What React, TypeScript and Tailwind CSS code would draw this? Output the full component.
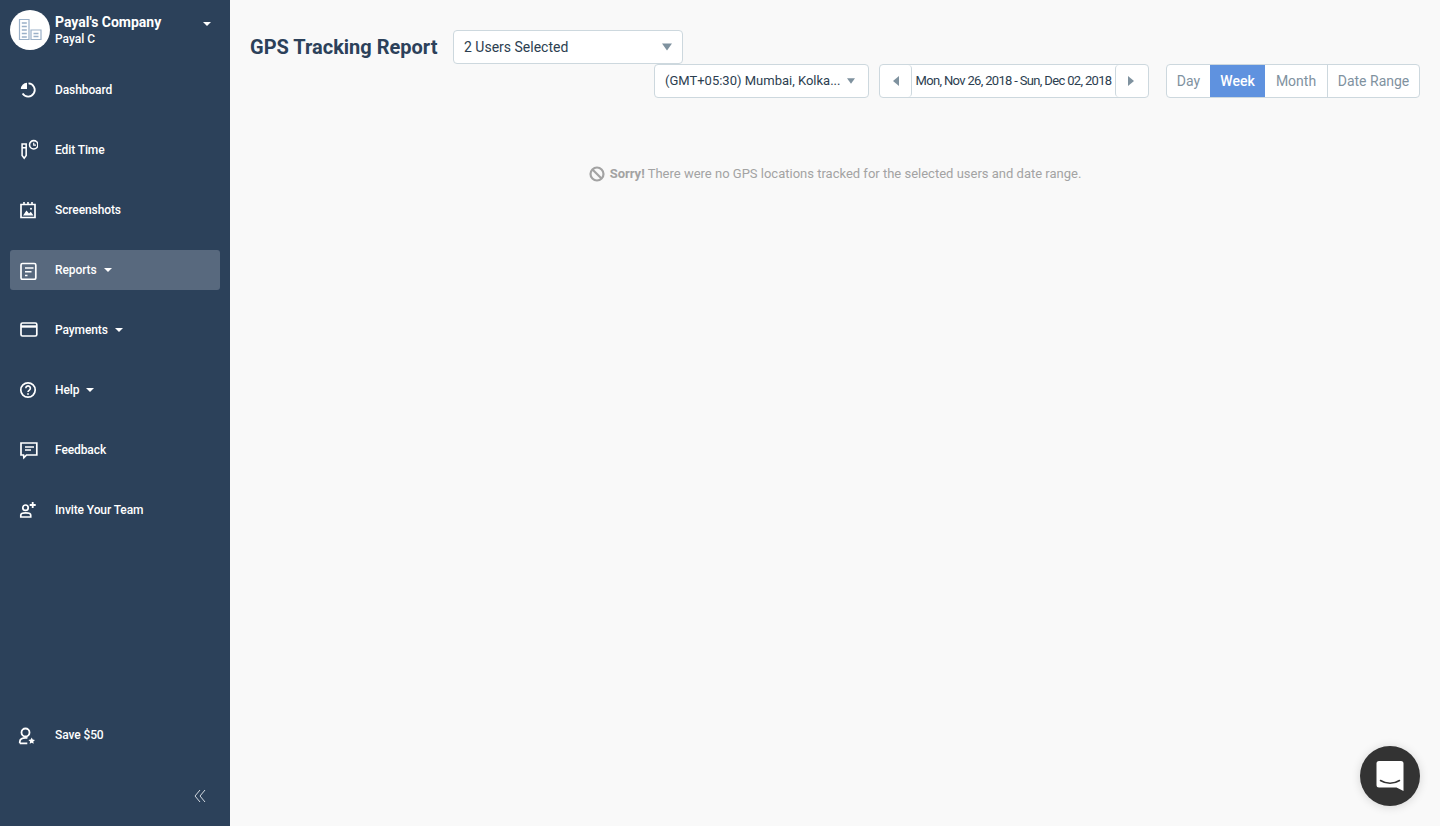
import { ReactNode } from "react";

const Caret = ({ className = "" }: { className?: string }) => (
  <svg viewBox="0 0 8 4" className={`w-2 h-1 fill-white ${className}`}>
    <path d="M0 0h8L4 4z" />
  </svg>
);

const solid = "fill-white stroke-none";
const icon = "w-5 h-5 fill-none stroke-white";

const icons: Record<string, ReactNode> = {
  dashboard: (
    <svg viewBox="0 0 20 20" className={icon}>
      <path d="M4.600 13.600a6.600 6.600 0 1 0 5.900-10.200" strokeWidth="1.800" />
      <path d="M9 2.800v6.300H2.800A6.200 6.200 0 0 1 9 2.800z" className={solid} />
    </svg>
  ),
  edit: (
    <svg viewBox="-1 0 22 22" className="w-[22px] h-[22px] fill-none stroke-white">
      <path d="M3.500 4.500h4.500v12.500l-2.200 3-2.300-3z" strokeWidth="1.700" />
      <path d="M3.500 8.500h4.500" strokeWidth="1.700" />
      <circle cx="16.300" cy="5.300" r="4.600" strokeWidth="1.700" />
      <path d="M16.300 3v2.600h2.500" strokeWidth="1.300" />
    </svg>
  ),
  screenshots: (
    <svg viewBox="0 0 20 20" className={icon}>
      <path d="M3 4.500h14v13H3z" strokeWidth="1.700" />
      <path d="M6 2v3M10 2v3M14 2v3" strokeWidth="1.600" />
      <path d="M5 15.500l3.500-5 2.500 3 1.800-1.800 2.700 3.800z" className={solid} />
      <circle cx="13" cy="8.800" r="1" className={solid} />
    </svg>
  ),
  reports: (
    <svg viewBox="0 0 20 20" className={icon}>
      <rect x="3" y="3.500" width="14.800" height="15.800" rx="1.500" strokeWidth="1.700" />
      <path d="M7 8h8.500M7 11.700h6.500M7 15.500h2.500" strokeWidth="1.500" />
    </svg>
  ),
  payments: (
    <svg viewBox="0 0 20 20" className={icon}>
      <rect x="3" y="3" width="15.800" height="13" rx="1.500" strokeWidth="1.700" />
      <path d="M3 6.500h15.800" strokeWidth="2.400" />
    </svg>
  ),
  help: (
    <svg viewBox="0 0 20 20" className={icon}>
      <circle cx="10" cy="10" r="7.200" strokeWidth="1.700" />
      <path d="M7.800 8.200a2.300 2.300 0 1 1 3.600 1.900c-.9.600-1.400 1-1.400 2" strokeWidth="1.600" />
      <path d="M10 13.200v1.500" strokeWidth="1.700" />
    </svg>
  ),
  feedback: (
    <svg viewBox="0 0 20 20" className={icon}>
      <path d="M3 3h15.800v12H8.500l-2.600 2.700-.4-2.700H3z" strokeWidth="1.700" />
      <path d="M7 6.900h9M7 10h6" strokeWidth="1.500" />
    </svg>
  ),
  invite: (
    <svg viewBox="0 0 20 20" className={icon}>
      <circle cx="7.500" cy="7.700" r="2.700" strokeWidth="1.700" />
      <path d="M2.800 17v-2c0-1.200 2.100-2.200 4.900-2.200s5 1 5 2.200v2z" strokeWidth="1.700" />
      <path d="M14.700 2v6M11.700 5h6" strokeWidth="1.800" />
    </svg>
  ),
  save: (
    <svg viewBox="0 0 20 20" className={icon}>
      <circle cx="7.500" cy="7.500" r="4" strokeWidth="1.800" />
      <path d="M1.800 18.300v-1.500c0-2.500 2.700-4 5.700-4 .7 0 1.300 0 2 .2M1.800 18.300h7.500" strokeWidth="1.800" />
      <path d="M13.700 12.500l1 2.100 2.300.3-1.700 1.600.4 2.300-2-1.100-2 1.100.4-2.300-1.700-1.600 2.300-.3z" className={solid} />
    </svg>
  ),
};

const NavItem = ({ name, label, caret, active }: { name: string; label: string; caret?: boolean; active?: boolean }) => (
  <div className={`flex items-center h-10 pl-2 rounded-[3px] ${active ? "bg-[#58697e]" : ""}`}>
    <div className="w-5 flex justify-center shrink-0">{icons[name]}</div>
    <span className="ml-[17px] text-[12px] font-medium text-white tracking-[-0.1px]">{label}</span>
    {caret && <Caret className="ml-[7px]" />}
  </div>
);

const GreyCaret = ({ className = "" }: { className?: string }) => (
  <svg viewBox="0 0 10 7" className={`fill-[#7f929f] ${className}`}>
    <path d="M0 0h10L5 7z" />
  </svg>
);

export default function App() {
  return (
    <div className="relative flex h-[826px] overflow-hidden bg-[#f9f9f9] font-['Roboto',sans-serif]">
      <aside className="w-[230px] shrink-0 flex flex-col bg-[#2c415a] px-[10px] pt-[10px]">
        <div className="flex items-center h-10 mb-5">
          <div className="w-10 h-10 rounded-full bg-white flex items-center justify-center shrink-0">
            <svg viewBox="0 0 24 24" className="w-6 h-6 fill-none stroke-[#9ab0c8]">
              <path d="M1.500 1.500h9.500v20H1.500zM13 12h10v9.500H13z" strokeWidth="1.200" />
              <path d="M3.800 5h5M3.800 8.500h5M3.800 12h5M3.800 15.500h5M3.800 19h5M15.500 15.500h5M15.500 18.500h5" strokeWidth="1.400" />
            </svg>
          </div>
          <div className="ml-[5px] flex-1 text-white">
            <div className="text-[14px] leading-[16px] font-bold">Payal's Company</div>
            <div className="text-[12px] leading-[16px] pt-px font-medium">Payal C</div>
          </div>
          <Caret className="mr-[9px] mb-[13px]" />
        </div>
        <nav className="flex flex-col gap-5">
          <NavItem name="dashboard" label="Dashboard" />
          <NavItem name="edit" label="Edit Time" />
          <NavItem name="screenshots" label="Screenshots" />
          <NavItem name="reports" label="Reports" caret active />
          <NavItem name="payments" label="Payments" caret />
          <NavItem name="help" label="Help" caret />
          <NavItem name="feedback" label="Feedback" />
          <NavItem name="invite" label="Invite Your Team" />
        </nav>
        <div className="mt-auto">
          <NavItem name="save" label="Save $50" />
          <div className="flex justify-end h-[71px] pt-[34px] pr-[14px]">
            <svg viewBox="0 0 12 14" className="w-3 h-[14px] fill-none stroke-[#d3d9e0]" strokeWidth="1">
              <path d="M6 1L1 7l5 6M11 1L6 7l5 6" />
            </svg>
          </div>
        </div>
      </aside>

      <main className="flex-1 px-5 pt-[30px]">
        <div className="flex items-center h-[34px]">
          <h1 className="text-[20px] font-bold text-[#2c415a] w-[203px]">GPS Tracking Report</h1>
          <div className="w-[230px] h-[34px] flex items-center justify-between pl-[10px] pr-[10px] bg-white border border-[#cdd8de] rounded-[4px]">
            <span className="text-[14px] text-[#2c3e50]">2 Users Selected</span>
            <GreyCaret className="w-[10px] h-2" />
          </div>
        </div>
        <div className="flex justify-end items-center h-[34px]">
          <div className="w-[215px] h-[34px] flex items-center justify-between pl-[10px] pr-[13px] bg-white border border-[#cdd8de] rounded-[4px]">
            <span className="text-[13px] text-[#2c3e50]">(GMT+05:30) Mumbai, Kolka...</span>
            <GreyCaret className="w-2 h-[6px]" />
          </div>
          <div className="ml-[10px] w-[270px] h-[34px] flex items-stretch bg-white border border-[#cdd8de] rounded-[4px]">
            <div className="w-[32px] flex items-center justify-center border-r border-[#cdd8de] rounded-[4px]">
              <svg viewBox="0 0 6 10" className="w-[6px] h-[10px] fill-[#7f929f]"><path d="M6 0v10L0 5z" /></svg>
            </div>
            <div className="flex-1 flex items-center justify-center text-[13px] tracking-[-0.66px] text-[#2c3e50] whitespace-nowrap">Mon, Nov 26, 2018 - Sun, Dec 02, 2018</div>
            <div className="w-[33px] flex items-center justify-center pr-[2px] border-l border-[#cdd8de] rounded-[4px]">
              <svg viewBox="0 0 6 10" className="w-[6px] h-[10px] fill-[#7f929f]"><path d="M0 0v10l6-5z" /></svg>
            </div>
          </div>
          <div className="ml-[17px] w-[254px] h-[34px] flex bg-white border border-[#cdd8de] rounded-[4px] overflow-hidden text-[14px] text-[#7f929f]">
            <div className="w-[43px] flex items-center justify-center">Day</div>
            <div className="w-[55px] flex items-center justify-center bg-[#5f92df] text-white font-medium">Week</div>
            <div className="w-[63px] flex items-center justify-center border-r border-[#cdd8de]">Month</div>
            <div className="flex-1 flex items-center justify-center">Date Range</div>
          </div>
        </div>
        <div className="mt-[66px] flex items-center justify-center text-[13px] text-[#a3a3a3]">
          <svg viewBox="0 0 16 16" className="w-4 h-4 mr-[5px] fill-none stroke-[#a3a3a3]" strokeWidth="2.200">
            <circle cx="8" cy="8" r="6.500" />
            <path d="M3.500 3.500l9 9" />
          </svg>
          <span className="font-bold mr-[3px]">Sorry!</span>
          There were no GPS locations tracked for the selected users and date range.
        </div>
      </main>

      <div className="absolute right-5 bottom-5 w-[60px] h-[60px] rounded-full bg-[#333333] flex items-center justify-center shadow-[0_1px_10px_rgba(0,0,0,0.15)]">
        <svg viewBox="0 0 28 32" className="w-7 h-8">
          <path d="M3 1h22a2.500 2.500 0 0 1 2.500 2.500V31l-7-3.500H3A2.500 2.500 0 0 1 .5 25V3.500A2.500 2.500 0 0 1 3 1z" className="fill-white" />
          <path d="M4.500 20.500c5.500 3.500 13.500 3.500 19 0" className="fill-none stroke-[#333333]" strokeWidth="1.500" strokeLinecap="round" />
        </svg>
      </div>
    </div>
  );
}
